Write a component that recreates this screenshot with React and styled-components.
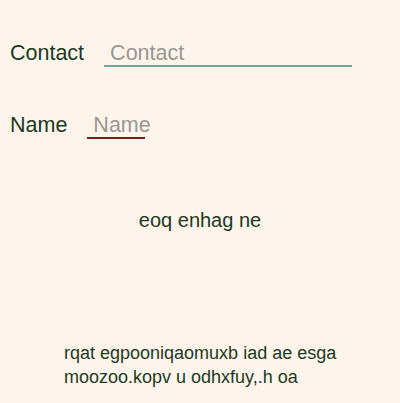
import React from 'react';
import styled, { createGlobalStyle } from 'styled-components';

const Global = createGlobalStyle`
  html, body {
    margin: 0;
    padding: 0;
    background: #fdf5eb;
  }
  body {
    font-family: "Liberation Sans", Arial, sans-serif;
    color: #1d3a23;
  }
`;

const Page = styled.div`
  width: 400px;
  height: 403px;
  box-sizing: border-box;
  padding: 42px 10px 0;
  display: flex;
  flex-direction: column;
`;

const Field = styled.label`
  display: flex;
  align-items: baseline;
  gap: 20px;
  margin-bottom: ${(p) => p.after}px;
  font-size: 21.5px;
  line-height: 23px;
`;

const Input = styled.input`
  width: ${(p) => p.w}px;
  height: 25px;
  box-sizing: border-box;
  border: none;
  background: linear-gradient(${(p) => p.line}, ${(p) => p.line}) left bottom /
    ${(p) => p.lw}px 2px no-repeat;
  font: inherit;
  font-size: 21.5px;
  line-height: 23px;
  padding: 0 0 2px 6px;
  margin: 0;
  color: #1d3a23;
  outline: none;
  &::placeholder {
    color: #9a9792;
  }
`;

const Heading = styled.p`
  margin: 69px 0 0;
  text-align: center;
  font-size: 20px;
  line-height: 24px;
`;

const Note = styled.p`
  margin: 109px 0 0 54px;
  font-size: 18px;
  line-height: 24px;
  width: 300px;
`;

export default function App() {
  return (
    <>
      <Global />
      <Page>
        <Field after={47}>
          Contact
          <Input placeholder="Contact" w={248} lw={248} line="#6aa89c" />
        </Field>
        <Field after={0}>
          Name
          <Input placeholder="Name" w={72} lw={58} line="#7b1a17" />
        </Field>
        <Heading>eoq enhag ne</Heading>
        <Note>
          rqat egpooniqaomuxb iad ae esga moozoo.kopv u odhxfuy,.h oa
        </Note>
      </Page>
    </>
  );
}
